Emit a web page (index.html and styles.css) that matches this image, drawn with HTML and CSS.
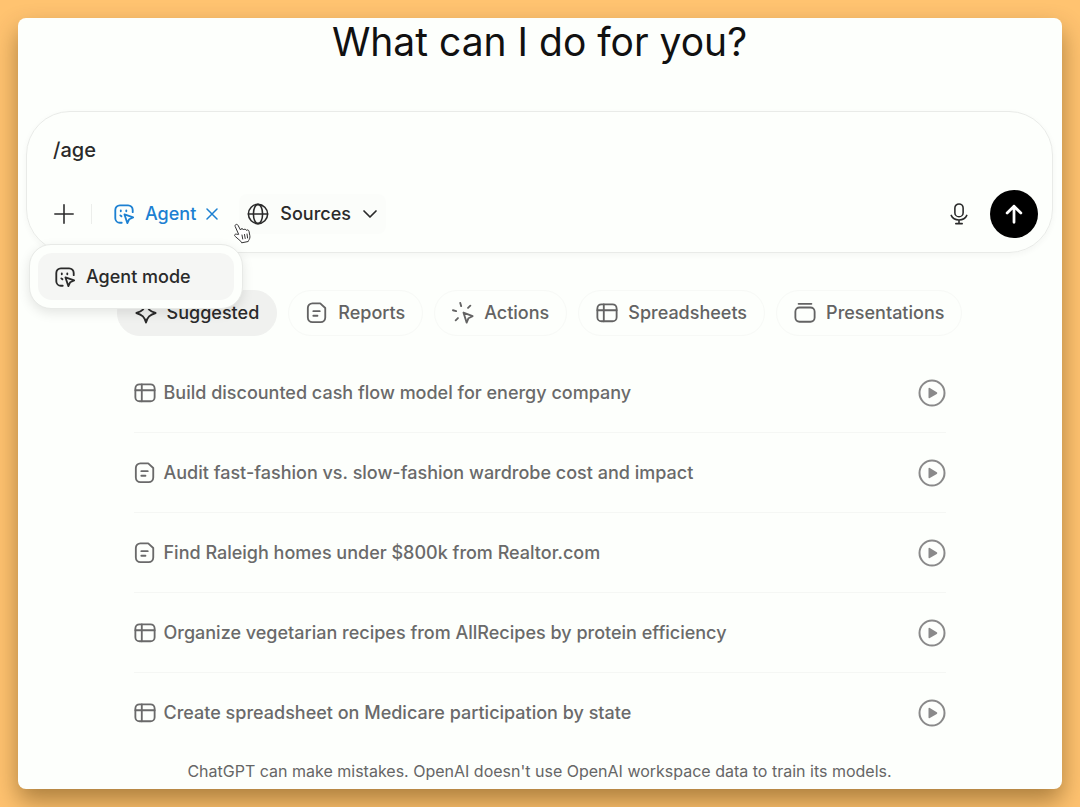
FILE: index.html
```
<!DOCTYPE html>
<html lang="en">
<head>
    <meta charset="UTF-8">
    <meta name="viewport" content="width=device-width, initial-scale=1.0">
    <title>ChatGPT</title>
    <link rel="stylesheet" href="styles.css">
</head>
<body>
    <svg class="sprite" aria-hidden="true">
        <symbol id="agent" viewBox="0 0 24 24">
            <path d="M9.500 21.500H7.500a5 5 0 0 1-5-5v-9a5 5 0 0 1 5-5h9a5 5 0 0 1 5 5v2.500"/>
            <path d="M12.500 12.500l9.500 3.300-4.300 1.900-2 4.300z"/>
            <path d="M8.500 8v1M14.500 8v1M8 13.500l1.200 1"/>
        </symbol>
        <symbol id="sheet" viewBox="0 0 24 24">
            <rect x="1.500" y="2.500" width="21" height="18.500" rx="4.500"/>
            <path d="M1.500 9h21M8.500 2.500V21"/>
        </symbol>
        <symbol id="report" viewBox="0 0 24 24">
            <path d="M7 1.500h8.500L21 6.500V17a5 5 0 0 1-5 5H7a5 5 0 0 1-5-5V6.500a5 5 0 0 1 5-5z"/>
            <path d="M8 10h7M8 15h4.500"/>
        </symbol>
        <symbol id="play" viewBox="0 0 28 28">
            <circle cx="14" cy="14" r="12.500"/>
            <path class="solid" d="M10.500 9.800v8.400q0 1.400 1.300.8l7-4.100q1.200-.9 0-1.700l-7-4.200q-1.300-.6-1.300.8z"/>
        </symbol>
    </svg>

    <main class="window">
        <h1>What can I do for you?</h1>

        <form class="composer">
            <input class="prompt" type="text" value="/age" aria-label="Message">
            <div class="toolbar">
                <button type="button" class="tool" aria-label="Add">
                    <svg class="icon thin" viewBox="0 0 24 24"><path d="M12 2v20M2 12h20"/></svg>
                </button>
                <span class="divider"></span>
                <button type="button" class="tool agent">
                    <svg class="icon"><use href="#agent"/></svg>
                    Agent
                    <svg class="close" viewBox="0 0 12 12"><path d="M1 1l10 10M11 1L1 11"/></svg>
                </button>
                <button type="button" class="tool sources">
                    <svg class="icon thin" viewBox="0 0 24 24">
                        <circle cx="12" cy="12" r="10.500"/>
                        <ellipse cx="12" cy="12" rx="5" ry="10.500"/>
                        <path d="M1.500 12h21"/>
                    </svg>
                    Sources
                    <svg class="chevron" viewBox="0 0 16 10"><path d="M2 2l6 6 6-6"/></svg>
                </button>
                <button type="button" class="tool mic" aria-label="Dictate">
                    <svg class="icon thin" viewBox="0 0 24 24">
                        <rect x="7.500" y="1" width="9" height="14" rx="4.500"/>
                        <path d="M3.500 13.500c1.500 3.500 4.500 5 8.500 5s7-1.500 8.500-5M12 18.500v4M8.500 22.500h7"/>
                    </svg>
                </button>
                <button type="submit" class="send" aria-label="Send">
                    <svg viewBox="0 0 24 24"><path d="M12 21V3.500M4.500 11L12 3.500l7.500 7.500"/></svg>
                </button>
            </div>
            <div class="menu">
                <button type="button" class="menu-item">
                    <svg class="icon"><use href="#agent"/></svg>
                    Agent mode
                </button>
            </div>
            <svg class="pointer" viewBox="0 0 20 22" aria-hidden="true">
                <path d="M6.500 12L3.200 4.500C2.500 2.500 5 1.500 6 3.300L8.500 8c.2-1.800 2.700-1.800 3 0 .6-1.300 2.500-1 2.900.4.800-1 2.400-.5 2.600.9l.8 4.200c.4 2-.1 3.500-1.200 5l-.4 1-6.500 1.300-.9-1.500c-2-1.500-3.500-3.300-5.500-4.800-1.800-1.500 0-3 1.500-2.300z"/>
                <path d="M10 13l.7 4M12.500 12.500l.7 4M15 12l.6 4"/>
            </svg>
        </form>

        <nav class="tabs">
            <button type="button" class="tab active">
                <svg class="icon" viewBox="0 0 24 24"><path d="M12 1.500c1.500 6 4 8.500 10.500 10.500C16 14 13.500 16.500 12 22.500 10.500 16.500 8 14 1.500 12 8 10 10.500 7.500 12 1.500z"/></svg>
                Suggested
            </button>
            <button type="button" class="tab">
                <svg class="icon"><use href="#report"/></svg>
                Reports
            </button>
            <button type="button" class="tab">
                <svg class="icon" viewBox="0 0 24 24">
                    <path d="M12.500 11.500l10 4-4.500 2.200-2 4.800z"/>
                    <path d="M9 1l1 3.500M1 9l3.500 1M20 4l-2.500 2.500M6.500 17.500L4 20"/>
                </svg>
                Actions
            </button>
            <button type="button" class="tab">
                <svg class="icon"><use href="#sheet"/></svg>
                Spreadsheets
            </button>
            <button type="button" class="tab">
                <svg class="icon" viewBox="0 0 24 24">
                    <rect x="1.500" y="6" width="21" height="15.500" rx="4.500"/>
                    <path d="M5 2h14"/>
                </svg>
                Presentations
            </button>
        </nav>

        <ul class="suggestions">
            <li>
                <button type="button" class="suggestion">
                    <svg class="icon"><use href="#sheet"/></svg>
                    <span>Build discounted cash flow model for energy company</span>
                    <svg class="play"><use href="#play"/></svg>
                </button>
            </li>
            <li>
                <button type="button" class="suggestion">
                    <svg class="icon"><use href="#report"/></svg>
                    <span>Audit fast-fashion vs. slow-fashion wardrobe cost and impact</span>
                    <svg class="play"><use href="#play"/></svg>
                </button>
            </li>
            <li>
                <button type="button" class="suggestion">
                    <svg class="icon"><use href="#report"/></svg>
                    <span>Find Raleigh homes under $800k from Realtor.com</span>
                    <svg class="play"><use href="#play"/></svg>
                </button>
            </li>
            <li>
                <button type="button" class="suggestion">
                    <svg class="icon"><use href="#sheet"/></svg>
                    <span>Organize vegetarian recipes from AllRecipes by protein efficiency</span>
                    <svg class="play"><use href="#play"/></svg>
                </button>
            </li>
            <li>
                <button type="button" class="suggestion">
                    <svg class="icon"><use href="#sheet"/></svg>
                    <span>Create spreadsheet on Medicare participation by state</span>
                    <svg class="play"><use href="#play"/></svg>
                </button>
            </li>
        </ul>

        <p class="note">ChatGPT can make mistakes. OpenAI doesn't use OpenAI workspace data to train its models.</p>
    </main>
</body>
</html>
```
FILE: styles.css
```
* {
    box-sizing: border-box;
}

body {
    margin: 0;
    padding: 18px;
    min-height: 100vh;
    display: flex;
    background: #ffc370;
    font-family: Inter, "Liberation Sans", sans-serif;
    font-size: 18px;
    font-weight: 450;
    line-height: 24px;
    color: #2a2a2a;
}

button,
input {
    font: inherit;
    color: inherit;
    border: 0;
    padding: 0;
    background: none;
}

button {
    display: flex;
    align-items: center;
    white-space: nowrap;
    cursor: pointer;
}

svg {
    flex: none;
    fill: none;
    stroke: currentColor;
    stroke-width: 2;
    stroke-linecap: round;
    stroke-linejoin: round;
}

.sprite {
    position: absolute;
    width: 0;
    height: 0;
}

.icon {
    width: 22px;
    height: 22px;
}

.thin {
    stroke-width: 1.7;
}

.solid {
    fill: currentColor;
    stroke: none;
}

.window {
    flex: 1;
    min-width: 0;
    padding: 0 9px 0 8px;
    border-radius: 8px;
    background: #fdfffc;
    box-shadow: 0 12px 24px rgba(70, 45, 0, 0.45);
}

h1 {
    margin: 0 0 45px;
    font-size: 39px;
    line-height: 48px;
    font-weight: 400;
    text-align: center;
    color: #111;
}

/* composer */
.composer {
    position: relative;
    padding: 24px 14px 14px 26px;
    border: 1px solid #e9ebe8;
    border-radius: 44px;
    box-shadow: 0 2px 6px rgba(0, 0, 0, 0.04);
}

.prompt {
    display: block;
    width: 100%;
    height: 28px;
    margin-bottom: 26px;
    font-size: 20px;
    outline: 0;
}

.toolbar {
    display: flex;
    align-items: center;
}

.divider {
    width: 1px;
    height: 20px;
    margin: 0 21px 0 16px;
    background: #eceeeb;
}

.agent {
    gap: 10px;
    color: #1c80d2;
}

.close {
    width: 12px;
    height: 12px;
    stroke-width: 1.5;
}

.sources {
    gap: 11px;
    height: 40px;
    margin-left: 21px;
    padding: 0 8px;
    border-radius: 8px;
    background: #fbfdfa;
}

.chevron {
    width: 16px;
    height: 10px;
    stroke-width: 1.7;
}

.mic {
    margin-left: auto;
}

.send {
    justify-content: center;
    width: 48px;
    height: 48px;
    margin-left: 20px;
    border-radius: 50%;
    background: #000;
    color: #fff;
}

.send svg {
    width: 22px;
    height: 22px;
    stroke-width: 3;
}

.menu {
    position: absolute;
    z-index: 1;
    top: 132px;
    left: 2px;
    padding: 8px;
    border: 1px solid #e8eae7;
    border-radius: 22px;
    background: #fdfffc;
    box-shadow: 0 4px 12px rgba(0, 0, 0, 0.1);
}

.menu-item {
    gap: 10px;
    width: 196px;
    height: 47px;
    padding: 0 16px;
    border-radius: 14px;
    background: #f5f6f4;
}

.pointer {
    position: absolute;
    z-index: 2;
    top: 110px;
    left: 205px;
    width: 20px;
    height: 22px;
    fill: #fff;
    stroke: #333;
    stroke-width: 1;
}

/* suggestions */
.tabs {
    display: flex;
    justify-content: center;
    gap: 11px;
    margin: 37px 0 17px;
}

.tab {
    gap: 10px;
    height: 46px;
    padding: 0 17px;
    border: 1px solid #f7f9f6;
    border-radius: 23px;
    color: #636363;
}

.active {
    border-color: #f0f1ef;
    background: #f0f1ef;
    color: #2a2a2a;
}

.suggestions {
    max-width: 812px;
    margin: 0 auto;
    padding: 0;
    list-style: none;
}

.suggestions li + li {
    border-top: 1px solid #f5f7f4;
}

.suggestion {
    gap: 8px;
    width: 100%;
    height: 79px;
    color: #6a6a6a;
}

.play {
    width: 28px;
    height: 28px;
    margin-left: auto;
    color: #8a8a8a;
}

.note {
    margin: 7px 0 0;
    font-size: 16px;
    font-weight: 400;
    text-align: center;
    color: #666;
}
```
